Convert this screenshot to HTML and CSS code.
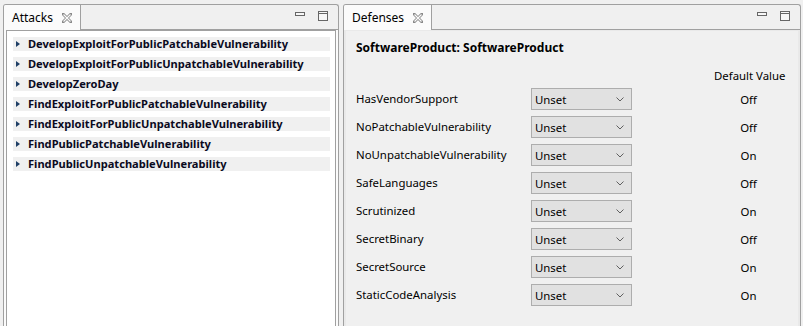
FILE: index.html
```html
<!DOCTYPE html>
<html>
<head>
<meta charset="utf-8">
<link rel="stylesheet" href="styles.css">
</head>
<body>
<div class="topbar"></div>
<div class="workbench">
  <section class="panel panel-attacks">
    <header class="panel-head">
      <div class="tab">
        <span class="tab-label">Attacks</span>
        <svg class="tab-close" width="10" height="10" viewBox="0 0 10 10"><path d="M1 1 L9 9 M9 1 L1 9" stroke="#8a8a8a" stroke-width="3" stroke-linecap="square"/><path d="M1.5 1.5 L8.5 8.5 M8.5 1.5 L1.5 8.5" stroke="#fbfbfb" stroke-width="1.2"/></svg>
      </div>
      <div class="head-fill">
        <svg class="ico-min" width="10" height="4" viewBox="0 0 10 4"><rect x="0.5" y="0.5" width="9" height="3" fill="#f7f7f7" stroke="#666"/></svg>
        <svg class="ico-max" width="10" height="10" viewBox="0 0 10 10"><rect x="0.5" y="0.5" width="9" height="9" fill="#f7f7f7" stroke="#666"/><line x1="0" y1="2.5" x2="10" y2="2.5" stroke="#666"/></svg>
      </div>
    </header>
    <div class="panel-body">
      <div class="tree">
        <div class="tree-row"><span class="twisty"></span>DevelopExploitForPublicPatchableVulnerability</div>
        <div class="tree-row"><span class="twisty"></span>DevelopExploitForPublicUnpatchableVulnerability</div>
        <div class="tree-row"><span class="twisty"></span>DevelopZeroDay</div>
        <div class="tree-row"><span class="twisty"></span>FindExploitForPublicPatchableVulnerability</div>
        <div class="tree-row"><span class="twisty"></span>FindExploitForPublicUnpatchableVulnerability</div>
        <div class="tree-row"><span class="twisty"></span>FindPublicPatchableVulnerability</div>
        <div class="tree-row"><span class="twisty"></span>FindPublicUnpatchableVulnerability</div>
      </div>
    </div>
  </section>
  <section class="panel panel-defenses">
    <header class="panel-head">
      <div class="tab">
        <span class="tab-label">Defenses</span>
        <svg class="tab-close" width="10" height="10" viewBox="0 0 10 10"><path d="M1 1 L9 9 M9 1 L1 9" stroke="#8a8a8a" stroke-width="3" stroke-linecap="square"/><path d="M1.5 1.5 L8.5 8.5 M8.5 1.5 L1.5 8.5" stroke="#fbfbfb" stroke-width="1.2"/></svg>
      </div>
      <div class="head-fill">
        <svg class="ico-min" width="10" height="4" viewBox="0 0 10 4"><rect x="0.5" y="0.5" width="9" height="3" fill="#f7f7f7" stroke="#666"/></svg>
        <svg class="ico-max" width="10" height="10" viewBox="0 0 10 10"><rect x="0.5" y="0.5" width="9" height="9" fill="#f7f7f7" stroke="#666"/><line x1="0" y1="2.5" x2="10" y2="2.5" stroke="#666"/></svg>
      </div>
    </header>
    <div class="panel-body">
      <div class="form">
        <h2 class="form-title">SoftwareProduct: SoftwareProduct</h2>
        <div class="grid">
          <div></div><div></div><div class="col-head">Default Value</div>

          <div class="lbl">HasVendorSupport</div>
          <div class="combo"><span>Unset</span><svg width="8" height="5" viewBox="0 0 8 5"><polyline points="0.5,0.5 4,4 7.5,0.5" fill="none" stroke="#606060"/></svg></div>
          <div class="val">Off</div>

          <div class="lbl">NoPatchableVulnerability</div>
          <div class="combo"><span>Unset</span><svg width="8" height="5" viewBox="0 0 8 5"><polyline points="0.5,0.5 4,4 7.5,0.5" fill="none" stroke="#606060"/></svg></div>
          <div class="val">Off</div>

          <div class="lbl">NoUnpatchableVulnerability</div>
          <div class="combo"><span>Unset</span><svg width="8" height="5" viewBox="0 0 8 5"><polyline points="0.5,0.5 4,4 7.5,0.5" fill="none" stroke="#606060"/></svg></div>
          <div class="val">On</div>

          <div class="lbl">SafeLanguages</div>
          <div class="combo"><span>Unset</span><svg width="8" height="5" viewBox="0 0 8 5"><polyline points="0.5,0.5 4,4 7.5,0.5" fill="none" stroke="#606060"/></svg></div>
          <div class="val">Off</div>

          <div class="lbl">Scrutinized</div>
          <div class="combo"><span>Unset</span><svg width="8" height="5" viewBox="0 0 8 5"><polyline points="0.5,0.5 4,4 7.5,0.5" fill="none" stroke="#606060"/></svg></div>
          <div class="val">On</div>

          <div class="lbl">SecretBinary</div>
          <div class="combo"><span>Unset</span><svg width="8" height="5" viewBox="0 0 8 5"><polyline points="0.5,0.5 4,4 7.5,0.5" fill="none" stroke="#606060"/></svg></div>
          <div class="val">Off</div>

          <div class="lbl">SecretSource</div>
          <div class="combo"><span>Unset</span><svg width="8" height="5" viewBox="0 0 8 5"><polyline points="0.5,0.5 4,4 7.5,0.5" fill="none" stroke="#606060"/></svg></div>
          <div class="val">On</div>

          <div class="lbl">StaticCodeAnalysis</div>
          <div class="combo"><span>Unset</span><svg width="8" height="5" viewBox="0 0 8 5"><polyline points="0.5,0.5 4,4 7.5,0.5" fill="none" stroke="#606060"/></svg></div>
          <div class="val">On</div>
        </div>
      </div>
    </div>
  </section>
</div>
</body>
</html>
```

FILE: styles.css
```css
* { box-sizing: border-box; }
html, body { margin: 0; padding: 0; }
body {
  background: #f0f0f0;
  font-family: "Noto Sans", "Open Sans", sans-serif;
  font-size: 11.4px;
  color: #000;
  width: 803px;
  height: 326px;
  overflow: hidden;
}
.topbar { height: 4px; }
.workbench {
  display: flex;
  gap: 4px;
  padding-left: 3px;
  height: 322px;
}
.panel {
  border: 1px solid #a0a0a0;
  border-bottom: none;
  border-radius: 3px 3px 0 0;
  display: flex;
  flex-direction: column;
  background: #f0f0f0;
}
.panel-attacks { width: 336px; }
.panel-defenses { width: 458px; }
.panel-head {
  display: flex;
  height: 25px;
  flex: none;
}
.tab {
  display: flex;
  align-items: center;
  gap: 9px;
  padding: 0 8px 0 8px;
  background: #fbfbfb;
  border-right: 1px solid #a0a0a0;
  border-radius: 2px 0 0 0;
  font-size: 12px;
}
.tab-label { line-height: 16px; }
.tab-close { margin-top: 1px; }
.head-fill {
  flex: 1;
  border-bottom: 1px solid #a0a0a0;
  display: flex;
  justify-content: flex-end;
  align-items: flex-start;
  padding: 6px 10px 0 0;
  gap: 13px;
}
.ico-min { margin-top: 1px; }
.panel-body {
  flex: 1;
  padding: 0 2px;
  background: #fbfbfb;
  display: flex;
}
.tree {
  flex: 1;
  background: #fff;
  border: 1px solid #a0a0a0;
  border-bottom: none;
  padding: 6px 5px 0 6px;
  display: flex;
  flex-direction: column;
  gap: 6px;
}
.tree-row {
  height: 14px;
  background: #f0f0f0;
  font-weight: 700;
  font-size: 11.1px;
  line-height: 14px;
  display: flex;
  align-items: center;
  color: #0a0a1e;
  white-space: nowrap;
}
.twisty {
  width: 0; height: 0;
  border-top: 3.5px solid transparent;
  border-bottom: 3.5px solid transparent;
  border-left: 4px solid #1f3f66;
  margin: 0 8px 0 3px;
}
.panel-defenses .panel-body { background: #e9e9e9; padding-top: 1px; }
.form {
  flex: 1;
  background: #f0f0f0;
  padding: 9px 0 0 10px;
}
.form-title {
  margin: 0;
  font-size: 12px;
  font-weight: 700;
  line-height: 16px;
}
.grid {
  display: grid;
  grid-template-columns: 175px 101px 151px;
  row-gap: 6px;
  margin-top: 12px;
  align-items: center;
}
.grid > :nth-child(3n) { margin-left: 82px; width: 69px; }
.col-head { text-align: center; line-height: 16px; margin-bottom: -2px; white-space: nowrap; }
.lbl { line-height: 16px; white-space: nowrap; }
.combo {
  height: 22px;
  background: #e1e1e1;
  border: 1px solid #adadad;
  display: flex;
  align-items: center;
  justify-content: space-between;
  padding: 0 7px 0 3px;
}
.val { text-align: center; }
```
